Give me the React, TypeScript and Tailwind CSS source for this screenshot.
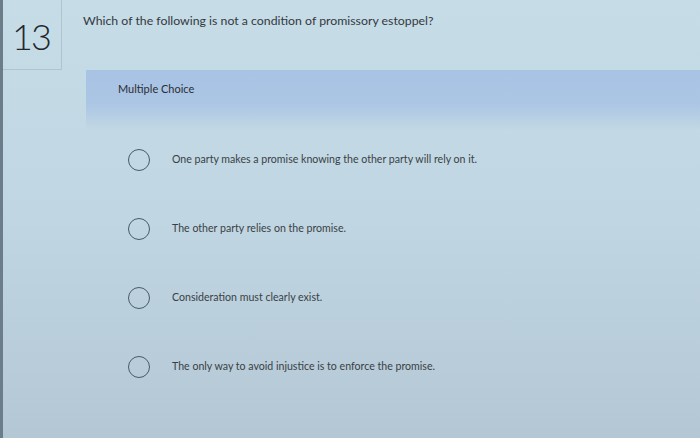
import React from "react";

const choices = [
    "One party makes a promise knowing the other party will rely on it.",
    "The other party relies on the promise.",
    "Consideration must clearly exist.",
    "The only way to avoid injustice is to enforce the promise.",
];

function Radio() {
    return (
        <div className="w-[22px] h-[22px] rounded-full border-[1.5px] border-[#4a5968] shrink-0" />
    );
}

export default function App() {
    return (
        <div
            className="w-[700px] h-[438px] overflow-hidden flex bg-gradient-to-b from-[#c6dce7] via-[#c0d6e2] to-[#b4c7d5] text-[#2f3338]"
            style={{ fontFamily: "Lato, 'Open Sans', sans-serif" }}
        >
            {/* dark bezel edge */}
            <div className="w-[3px] bg-[#6c7d8a] shrink-0" />

            <div className="flex-1 flex flex-col">
                <div className="flex">
                    <div className="w-[59px] h-[70px] border-r border-b border-[#b0c3ce] flex items-start pt-[18px] pl-[9px]">
                        <span className="text-[36px] font-light leading-none text-[#23272b] tracking-[-2px]">13</span>
                    </div>
                    <p className="ml-[21px] mt-[13px] text-[12.3px] text-[#34393f] leading-tight">
                        Which of the following is not a condition of promissory estoppel?
                    </p>
                </div>

                <div className="ml-[83px] flex flex-col">
                    <div className="h-[60px] bg-gradient-to-b from-[#a9c3e5] via-[#abc5e4] via-55% to-[#c2d8e4] pl-[32px] pt-[11px] text-[11px] leading-[16px] text-[#2a2e33]">
                        Multiple Choice
                    </div>

                    <div className="flex flex-col gap-[47px] mt-[19px]">
                        {choices.map((c, i) => (
                            <div key={i} className="flex items-center h-[22px] pl-[42px]">
                                <Radio />
                                <span className="ml-[22px] text-[10.6px] text-[#3a3f45]">{c}</span>
                            </div>
                        ))}
                    </div>
                </div>
            </div>
        </div>
    );
}
